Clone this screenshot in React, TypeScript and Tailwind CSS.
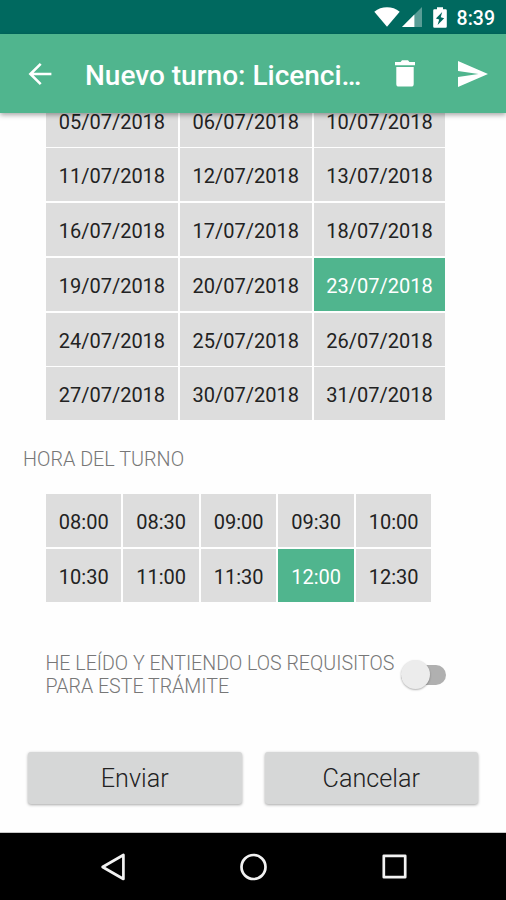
import { useState } from 'react';
import clsx from 'clsx';

const dates = [
    '05/07/2018', '06/07/2018', '10/07/2018',
    '11/07/2018', '12/07/2018', '13/07/2018',
    '16/07/2018', '17/07/2018', '18/07/2018',
    '19/07/2018', '20/07/2018', '23/07/2018',
    '24/07/2018', '25/07/2018', '26/07/2018',
    '27/07/2018', '30/07/2018', '31/07/2018',
];

const hours = [
    '08:00', '08:30', '09:00', '09:30', '10:00',
    '10:30', '11:00', '11:30', '12:00', '12:30',
];

function StatusBar() {
    return (
        <div className="h-[34px] shrink-0 bg-[#00695f] flex items-center justify-end pr-[11px] text-white">
            {/* Wifi */}
            <svg className="w-[26px] h-[20px]" viewBox="0 0 26 20" fill="currentColor">
                <path d="M0.3 4.8C4 1.6 8.3 0.2 13 0.2s9 1.4 12.7 4.6L13 19.8z" />
            </svg>
            {/* Signal */}
            <svg className="w-[20px] h-[20px] ml-[2px]" viewBox="0 0 20 20" fill="currentColor">
                <path d="M20 0v20H0z" opacity="0.35" />
                <path d="M12.4 7.6V20H0z" />
            </svg>
            {/* Battery */}
            <svg className="w-[14px] h-[21px] ml-[11px]" viewBox="0 0 14 21">
                <path d="M4 0.3h6v2h2.6q1.2 0 1.2 1.2v16q0 1.2-1.2 1.2H1.4q-1.2 0-1.2-1.2v-16q0-1.2 1.2-1.2H4z" fill="#fff" />
                <path d="M9.2 5L2.9 11.6l3.3 1L4.6 18L11.2 11.2l-3.5-1z" fill="#00695f" />
            </svg>
            <span className="mt-[3px] ml-[10px] text-[19.5px] leading-none font-medium">8:39</span>
        </div>
    );
}

function AppBar() {
    return (
        <header className="relative z-10 h-[79px] shrink-0 bg-[#50b58e] flex items-center text-white shadow-[0_2px_5px_rgba(0,0,0,0.35)]">
            <button aria-label="Volver" className="ml-[28px]">
                <svg className="w-[24px] h-[24px]" viewBox="0 0 24 24" fill="none" stroke="currentColor" strokeWidth="2.6">
                    <path d="M12.7 1.8L2.4 12l10.3 10.2M2.4 12h21" />
                </svg>
            </button>
            <h1 className="mt-[4px] ml-[33px] w-[280px] whitespace-nowrap text-[28px] leading-none font-medium">
                Nuevo turno: Licenci…
            </h1>
            <button aria-label="Eliminar" className="ml-[30px]">
                <svg className="w-[20px] h-[27px]" viewBox="0 0 20 27" fill="currentColor">
                    <path d="M0 2h5.6L7 0.3h6L14.4 2H20v3.2H0zM1.3 7h17.4v17q0 2.6-2.6 2.6H3.9q-2.6 0-2.6-2.6z" />
                </svg>
            </button>
            <button aria-label="Enviar turno" className="ml-[43px]">
                <svg className="w-[30px] h-[26px]" viewBox="0 0 30 26" fill="currentColor">
                    <path d="M0 0L30 13L0 26V16L20.5 13L0 10z" />
                </svg>
            </button>
        </header>
    );
}

function Cell({ label, selected, onClick }: { label: string; selected: boolean; onClick: () => void }) {
    return (
        <button
            onClick={onClick}
            className={clsx(
                'h-[53px] pt-[3px] text-[20px] leading-none',
                selected ? 'bg-[#50b58e] text-white' : 'bg-[#dddddd] text-[#222222]'
            )}
        >
            {label}
        </button>
    );
}

export default function App() {
    const [date, setDate] = useState('23/07/2018');
    const [hour, setHour] = useState('12:00');
    const [accepted, setAccepted] = useState(false);

    return (
        <div className="w-[506px] h-[900px] flex flex-col overflow-hidden bg-[#fefefe] font-[Roboto,sans-serif]">
            <StatusBar />
            <AppBar />

            {/* The form is scrolled, so the first row sits partly under the app bar */}
            <main className="flex-1 min-h-0 overflow-hidden flex flex-col border-b border-[#c8c8c8]">
                <div className="-mt-[19.5px] ml-[46px] w-[399.4px] shrink-0 grid grid-cols-3 gap-x-[2px] gap-y-[1.8px]">
                    {dates.map((d) => (
                        <Cell key={d} label={d} selected={d === date} onClick={() => setDate(d)} />
                    ))}
                </div>

                <h2 className="mt-[27.5px] ml-[23px] text-[19.8px] leading-[24px] font-light text-[#777777]">
                    HORA DEL TURNO
                </h2>

                <div className="mt-[22.5px] ml-[46px] w-[385.4px] shrink-0 grid grid-cols-5 gap-[2px]">
                    {hours.map((h) => (
                        <Cell key={h} label={h} selected={h === hour} onClick={() => setHour(h)} />
                    ))}
                </div>

                <div className="mt-[49px] ml-[45.5px] mr-[60px] flex items-center justify-between">
                    <p className="pt-px whitespace-nowrap text-[19.6px] leading-[23px] font-light text-[#777777]">
                        HE LEÍDO Y ENTIENDO LOS REQUISITOS
                        <br />
                        PARA ESTE TRÁMITE
                    </p>
                    <button
                        role="switch"
                        aria-checked={accepted}
                        aria-label="Aceptar requisitos"
                        onClick={() => setAccepted(!accepted)}
                        className="w-[45px] h-[20px] shrink-0 rounded-full bg-[#b0b0b0] flex items-center"
                    >
                        <span
                            className={clsx(
                                'w-[29px] h-[29px] shrink-0 rounded-full bg-[#ececec] shadow-[0_1px_2px_rgba(0,0,0,0.3)]',
                                accepted && 'ml-auto'
                            )}
                        />
                    </button>
                </div>

                <div className="mt-[54px] mx-[28px] flex gap-[23px]">
                    {['Enviar', 'Cancelar'].map((label) => (
                        <button
                            key={label}
                            className="flex-1 h-[52px] rounded-[3px] bg-[#d6d7d7] text-[25.2px] leading-none font-light text-[#222222] shadow-[0_1px_3px_rgba(0,0,0,0.35)]"
                        >
                            {label}
                        </button>
                    ))}
                </div>
            </main>

            {/* Navigation bar */}
            <nav className="h-[67px] shrink-0 bg-black flex items-center justify-between pl-[100px] pr-[99px]">
                <svg className="w-[26px] h-[28px]" viewBox="0 0 26 28" fill="none" stroke="#f2f2f2" strokeWidth="2.7" strokeLinejoin="round">
                    <path d="M23.4 2v24L2.6 14z" />
                </svg>
                <svg className="w-[28px] h-[28px]" viewBox="0 0 28 28" fill="none" stroke="#f2f2f2" strokeWidth="2.7">
                    <circle cx="13.5" cy="14" r="12" />
                </svg>
                <svg className="w-[25px] h-[25px]" viewBox="0 0 25 25" fill="none" stroke="#f2f2f2" strokeWidth="2.7" strokeLinejoin="round">
                    <rect x="1.8" y="1.8" width="21.4" height="21.4" />
                </svg>
            </nav>
        </div>
    );
}
